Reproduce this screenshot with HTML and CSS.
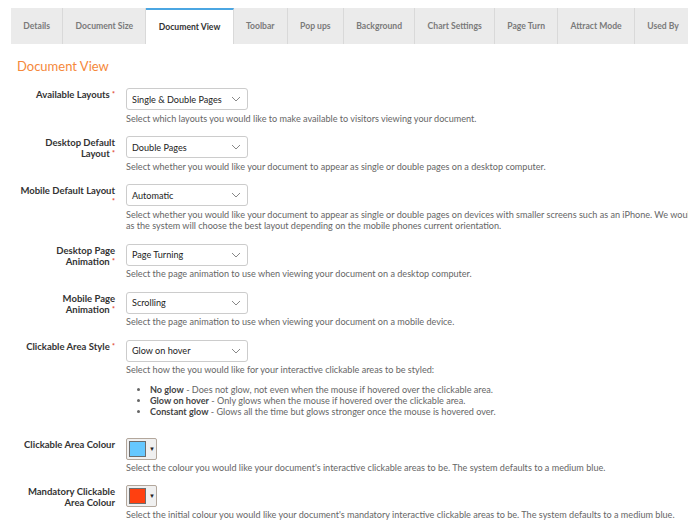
FILE: index.html
```html
<!DOCTYPE html>
<html lang="en">
<head>
    <meta charset="UTF-8">
    <title>Document View - Settings</title>
    <link rel="stylesheet" href="styles.css">
</head>
<body>
    <div class="page">
        <ul class="tabs">
            <li>Details</li>
            <li>Document Size</li>
            <li class="active">Document View</li>
            <li>Toolbar</li>
            <li>Pop ups</li>
            <li>Background</li>
            <li>Chart Settings</li>
            <li>Page Turn</li>
            <li>Attract Mode</li>
            <li>Used By</li>
        </ul>

        <div class="panel">
            <h2 class="section-title">Document View</h2>

            <div class="form-row">
                <label class="field-label">Available Layouts <span class="req">*</span></label>
                <div class="field">
                    <div class="select"><span>Single &amp; Double Pages</span><svg class="chev" width="10" height="6" viewBox="0 0 10 6"><path d="M1 1l4 4 4-4" fill="none" stroke="#888" stroke-width="1"/></svg></div>
                    <p class="help">Select which layouts you would like to make available to visitors viewing your document.</p>
                </div>
            </div>

            <div class="form-row">
                <label class="field-label">Desktop Default Layout <span class="req">*</span></label>
                <div class="field">
                    <div class="select"><span>Double Pages</span><svg class="chev" width="10" height="6" viewBox="0 0 10 6"><path d="M1 1l4 4 4-4" fill="none" stroke="#888" stroke-width="1"/></svg></div>
                    <p class="help">Select whether you would like your document to appear as single or double pages on a desktop computer.</p>
                </div>
            </div>

            <div class="form-row">
                <label class="field-label">Mobile Default Layout <span class="req">*</span></label>
                <div class="field">
                    <div class="select"><span>Automatic</span><svg class="chev" width="10" height="6" viewBox="0 0 10 6"><path d="M1 1l4 4 4-4" fill="none" stroke="#888" stroke-width="1"/></svg></div>
                    <p class="help">Select whether you would like your document to appear as single or double pages on devices with smaller screens such as an iPhone. We would recommend Automatic<br>as the system will choose the best layout depending on the mobile phones current orientation.</p>
                </div>
            </div>

            <div class="form-row">
                <label class="field-label">Desktop Page Animation <span class="req">*</span></label>
                <div class="field">
                    <div class="select"><span>Page Turning</span><svg class="chev" width="10" height="6" viewBox="0 0 10 6"><path d="M1 1l4 4 4-4" fill="none" stroke="#888" stroke-width="1"/></svg></div>
                    <p class="help">Select the page animation to use when viewing your document on a desktop computer.</p>
                </div>
            </div>

            <div class="form-row">
                <label class="field-label">Mobile Page Animation <span class="req">*</span></label>
                <div class="field">
                    <div class="select"><span>Scrolling</span><svg class="chev" width="10" height="6" viewBox="0 0 10 6"><path d="M1 1l4 4 4-4" fill="none" stroke="#888" stroke-width="1"/></svg></div>
                    <p class="help">Select the page animation to use when viewing your document on a mobile device.</p>
                </div>
            </div>

            <div class="form-row row-list">
                <label class="field-label">Clickable Area Style <span class="req">*</span></label>
                <div class="field">
                    <div class="select"><span>Glow on hover</span><svg class="chev" width="10" height="6" viewBox="0 0 10 6"><path d="M1 1l4 4 4-4" fill="none" stroke="#888" stroke-width="1"/></svg></div>
                    <p class="help">Select how the you would like for your interactive clickable areas to be styled:</p>
                    <ul class="help-list">
                        <li><b>No glow</b> - Does not glow, not even when the mouse if hovered over the clickable area.</li>
                        <li><b>Glow on hover</b> - Only glows when the mouse if hovered over the clickable area.</li>
                        <li><b>Constant glow</b> - Glows all the time but glows stronger once the mouse is hovered over.</li>
                    </ul>
                </div>
            </div>

            <div class="form-row row-colour">
                <label class="field-label">Clickable Area Colour</label>
                <div class="field">
                    <div class="colour-pick"><span class="swatch swatch-blue"></span><span class="arrow">&#9660;</span></div>
                    <p class="help">Select the colour you would like your document's interactive clickable areas to be. The system defaults to a medium blue.</p>
                </div>
            </div>

            <div class="form-row row-colour">
                <label class="field-label">Mandatory Clickable Area Colour</label>
                <div class="field">
                    <div class="colour-pick"><span class="swatch swatch-red"></span><span class="arrow">&#9660;</span></div>
                    <p class="help">Select the initial colour you would like your document's mandatory interactive clickable areas to be. The system defaults to a medium blue.</p>
                </div>
            </div>
        </div>
    </div>
</body>
</html>
```

FILE: styles.css
```css
html {
    overflow: hidden;
}
body {
    font-family: Lato, "Open Sans", sans-serif;
    background-color: #ffffff;
    color: #333333;
    margin: 0;
    padding: 0;
}
.page {
    width: 1000px;
    padding: 8px 0 0 11px;
}
.tabs {
    display: flex;
    list-style: none;
    margin: 0;
    padding: 0;
    height: 36px;
}
.tabs li {
    display: flex;
    align-items: center;
    padding: 0 12.3px;
    background-color: #ebebeb;
    border-right: 1px solid #d9d9d9;
    color: #7a7a7a;
    font-size: 8.6px;
    font-weight: bold;
    box-sizing: border-box;
}
.tabs li.active {
    background-color: #ffffff;
    color: #333333;
    border-top: 2px solid #4ba6e2;
}
.panel {
    padding: 0 0 0 6px;
}
.section-title {
    color: #f5883a;
    font-size: 13px;
    font-weight: normal;
    line-height: 16px;
    margin: 14px 0 14px;
}
.form-row {
    display: flex;
    gap: 11px;
    margin-bottom: 12px;
}
.field-label {
    width: 98px;
    flex-shrink: 0;
    text-align: right;
    font-size: 9.5px;
    font-weight: bold;
    line-height: 11px;
    padding-top: 1px;
}
.req {
    color: #e0452b;
    font-size: 7px;
    vertical-align: top;
}
.select {
    width: 122px;
    height: 22px;
    box-sizing: border-box;
    border: 1px solid #cccccc;
    border-radius: 3px;
    display: flex;
    align-items: center;
    justify-content: space-between;
    padding: 0 6px 0 5px;
    font-size: 9.1px;
    color: #222222;
    white-space: nowrap;
}
.help {
    margin: 2.5px 0 0;
    font-size: 9.1px;
    line-height: 11.5px;
    color: #666666;
}
.help-list {
    margin: 8px 0 0;
    padding-left: 24px;
    font-size: 9.1px;
    line-height: 11px;
    color: #666666;
}
.help-list b {
    color: #444444;
}
.row-list {
    margin-bottom: 21px;
}
.row-colour {
    margin-bottom: 11px;
}
.colour-pick {
    width: 31px;
    height: 22px;
    box-sizing: border-box;
    border: 1px solid #b3a79c;
    border-radius: 2px;
    background-color: #f0f0f0;
    display: flex;
    align-items: center;
    padding-left: 2px;
    gap: 3px;
}
.swatch {
    width: 17px;
    height: 16px;
    border: 1px solid #6d6d6d;
    box-sizing: border-box;
}
.swatch-blue {
    background-color: #66c8ff;
}
.swatch-red {
    background-color: #ff4010;
}
.arrow {
    font-size: 6px;
    color: #222222;
}
```
